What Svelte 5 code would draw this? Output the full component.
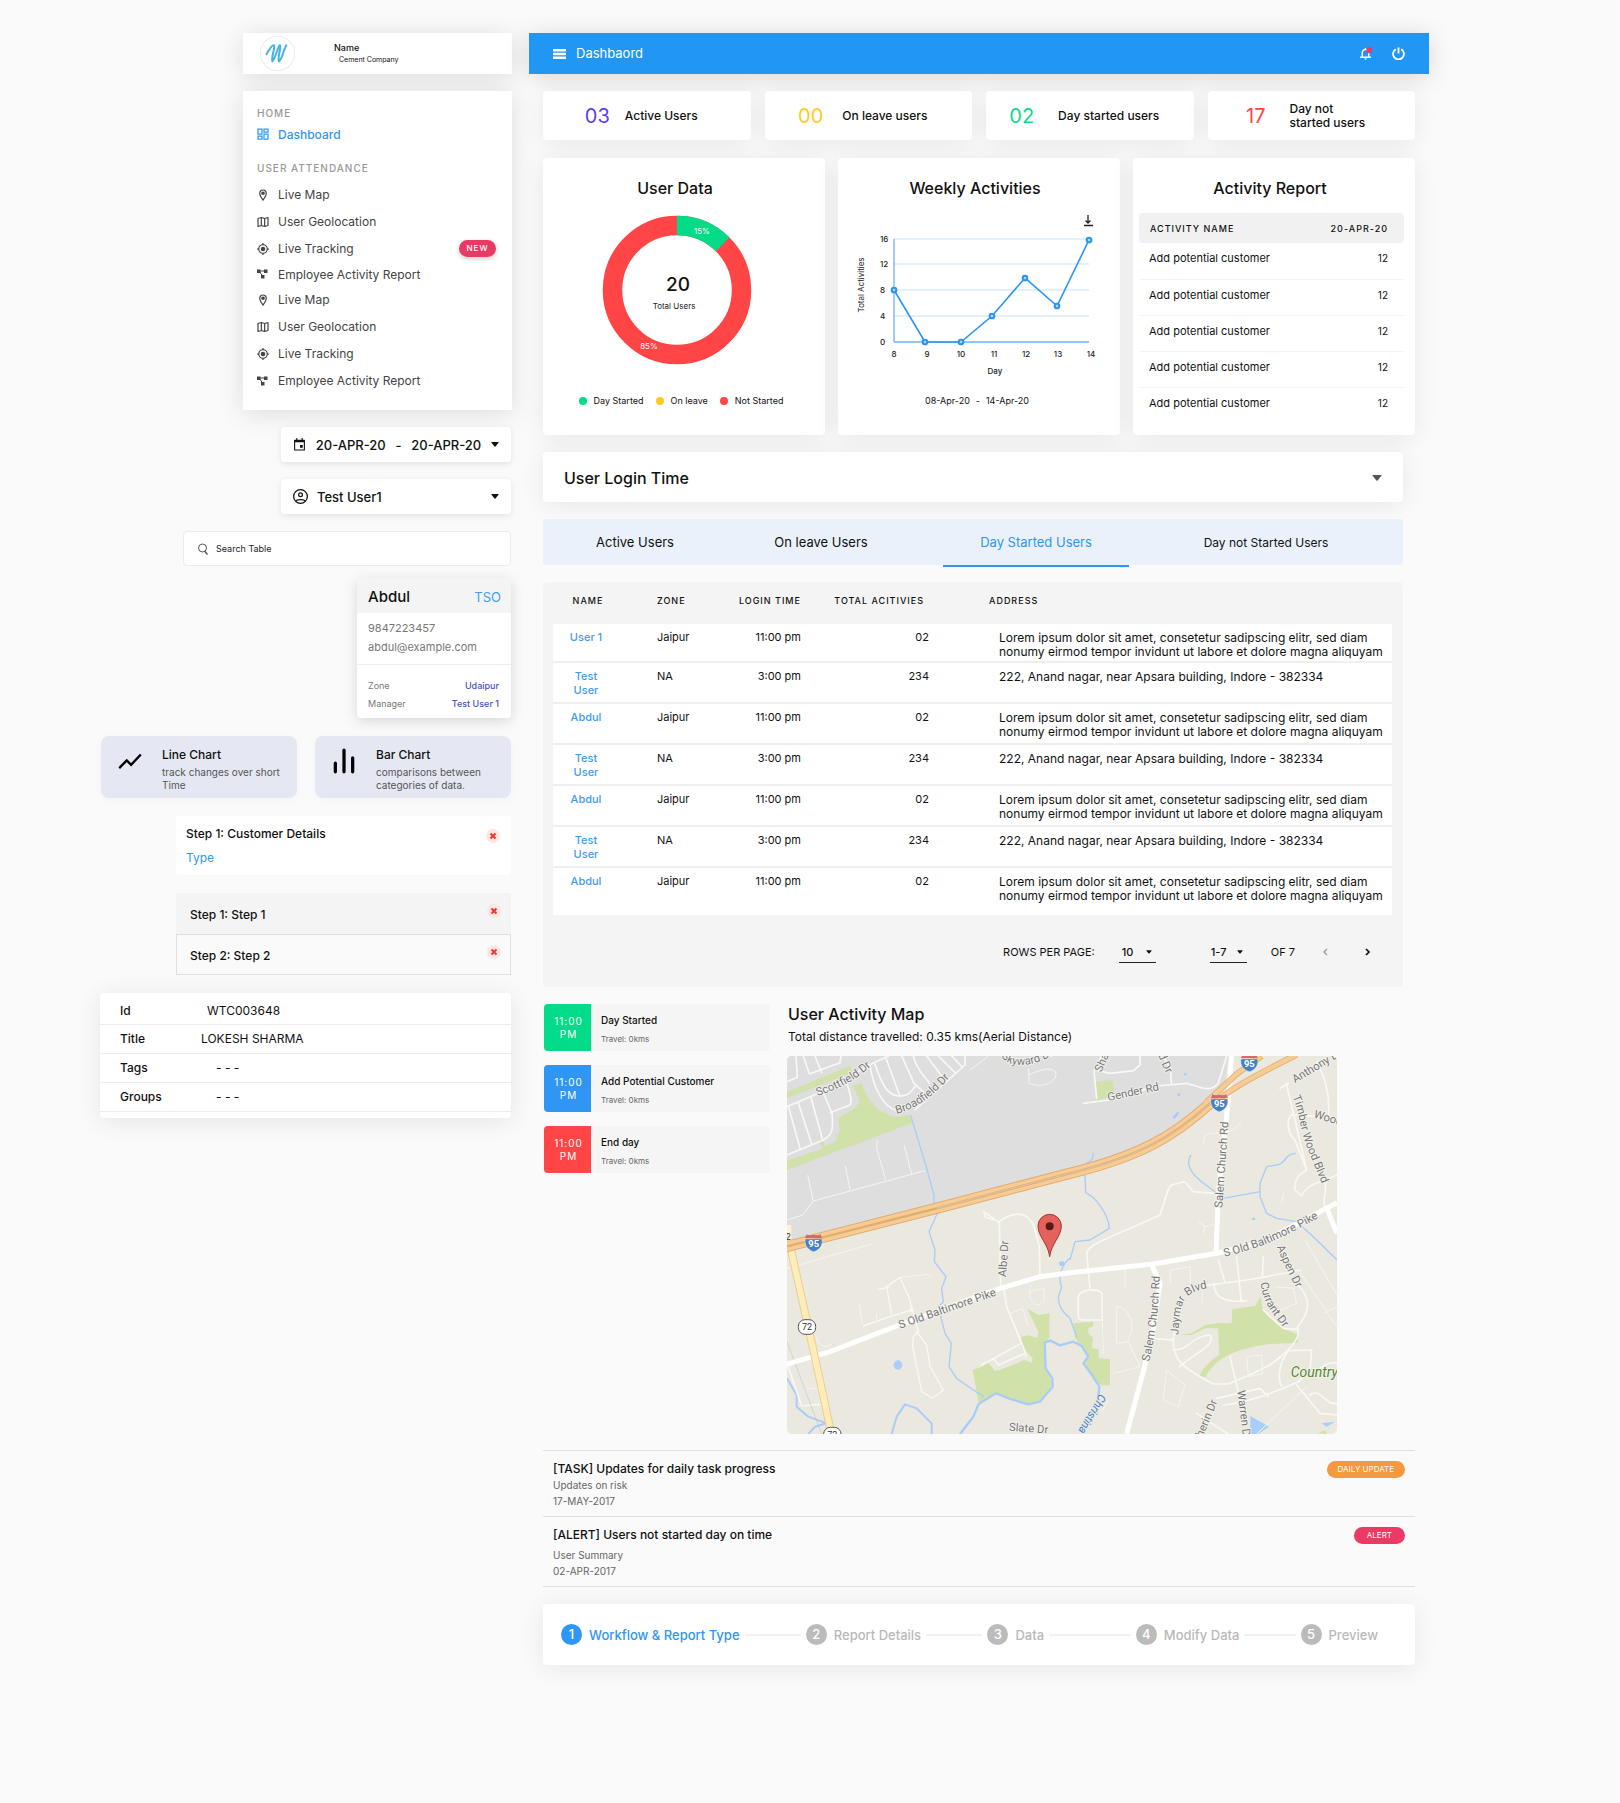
<script>
  const menu = [
    { icon: 'pin', label: 'Live Map' },
    { icon: 'map', label: 'User Geolocation' },
    { icon: 'target', label: 'Live Tracking', badge: 'NEW' },
    { icon: 'tree', label: 'Employee Activity Report', last: true },
    { icon: 'pin', label: 'Live Map' },
    { icon: 'map', label: 'User Geolocation' },
    { icon: 'target', label: 'Live Tracking' },
    { icon: 'tree', label: 'Employee Activity Report' }
  ];
  const stats = [
    { n: '03', label: 'Active Users', tone: 'violet' },
    { n: '00', label: 'On leave users', tone: 'yellow' },
    { n: '02', label: 'Day started users', tone: 'green' },
    { n: '17', label: 'Day not started users', tone: 'red' }
  ];
  const lorem = ['Lorem ipsum dolor sit amet, consetetur sadipscing elitr, sed diam', 'nonumy eirmod tempor invidunt ut labore et dolore magna aliquyam'];
  const plot = ['222, Anand nagar, near Apsara building, Indore - 382334'];
  const abdul = { name: 'Abdul', zone: 'Jaipur', time: '11:00 pm', total: '02', address: lorem };
  const test = { name: 'Test User', zone: 'NA', time: '3:00 pm', total: '234', address: plot };
  const logins = [{ ...abdul, name: 'User 1' }, test, abdul, test, abdul, test, abdul];
  const tabs = ['Active Users', 'On leave Users', 'Day Started Users', 'Day not Started Users'];
  let activeTab = $state(2);
  const events = [
    { label: 'Day Started', tone: 'green' },
    { label: 'Add Potential Customer', tone: 'blue' },
    { label: 'End day', tone: 'red' }
  ];
  const details = [
    { k: 'Id', v: 'WTC003648', kind: 'code' },
    { k: 'Title', v: 'LOKESH SHARMA', kind: 'name' },
    { k: 'Tags', v: '- - -', kind: 'empty' },
    { k: 'Groups', v: '- - -', kind: 'empty' }
  ];
  const steps = ['Workflow & Report Type', 'Report Details', 'Data', 'Modify Data', 'Preview'];
  const points = [[56, 85], [87, 137], [123, 137], [154, 111], [187, 73], [219, 101], [251, 35]];
  const yTicks = [[16, 34], [12, 59], [8, 85], [4, 111], [0, 137]];
  const xTicks = [[8, 56], [9, 89], [10, 123], [11, 156], [12, 188], [13, 220], [14, 253]];
</script>

{#snippet menuIcon(name)}
  <svg class="icon" viewBox="0 0 24 24" aria-hidden="true">
    {#if name === 'pin'}
      <path d="M12 2C8 2 5.500 5 5.500 8.500C5.500 14 12 22 12 22S18.500 14 18.500 8.500C18.500 5 16 2 12 2z" fill="none" stroke="currentColor" stroke-width="2.400" /><circle cx="12" cy="8.500" r="3.500" fill="currentColor" />
    {:else if name === 'map'}
      <path d="M2 5 8.700 3l6.600 2L22 3v16l-6.700 2-6.600-2L2 21zM8.700 3v16M15.300 5v16" fill="none" stroke="currentColor" stroke-width="2.400" stroke-linejoin="round" />
    {:else if name === 'target'}
      <circle cx="12" cy="12" r="8.500" fill="none" stroke="currentColor" stroke-width="2.400" /><circle cx="12" cy="12" r="4.500" fill="currentColor" /><path d="M12 0v4M12 20v4M0 12h4M20 12h4" stroke="currentColor" stroke-width="2.400" />
    {:else if name === 'tree'}
      <path d="M0 3h7v7H0zM14 3h7v7h-7zM8 14h7v7H8z" fill="currentColor" /><path d="M6 6h9M5 7l6 9" stroke="currentColor" stroke-width="2" />
    {:else}
      <path d="M2 2h8v10H2zM14 2h8v6h-8zM2 16h8v6H2zM14 12h8v10h-8z" fill="none" stroke="currentColor" stroke-width="2.500" />
    {/if}
  </svg>
{/snippet}

{#snippet caret()}
  <svg class="caret" viewBox="0 0 10 6" aria-hidden="true"><path d="M1 0h8q1 0 .4.800L5.600 5.400q-.6.600-1.200 0L.600.800Q0 0 1 0z" fill="currentColor" /></svg>
{/snippet}

{#snippet closeButton(label)}
  <button class="close" aria-label={label}>
    <svg viewBox="0 0 14 14" aria-hidden="true"><path d="M4.500 4.500l5 5M9.500 4.500l-5 5" stroke="#f0372f" stroke-width="2" /></svg>
  </button>
{/snippet}

{#snippet shield(x, y)}
  <g transform="translate({x} {y})">
    <path d="M-26 -13Q-20 -22 -22 -25Q-12 -20 0 -24Q12 -20 22 -25Q20 -22 26 -13z" fill="#d26a6a" />
    <path d="M-25 -11H25C28 8 18 22 0 27C-18 22 -28 8 -25 -11z" fill="#4580c4" stroke="#fff" stroke-width="1" />
    <text class="shield-text" x="0" y="13">95</text>
  </g>
{/snippet}

<div class="page">
  <aside class="side">
    <header class="brand">
      <svg class="logo" viewBox="0 0 102 102" role="img" aria-label="Company logo">
        <circle cx="51" cy="51" r="50" fill="#fff" stroke="#ececec" stroke-width="3" />
        <path d="M19 53C28 37 36 25 41 27C45 33 33 57 36 74C46 64 52 28 58 27C63 32 51 56 55 74C65 69 68 40 77 27" fill="none" stroke="#46b3e6" stroke-width="6" stroke-linecap="round" stroke-linejoin="round" />
      </svg>
      <div class="brand-text"><strong>Name</strong><span>Cement Company</span></div>
    </header>

    <nav class="menu" aria-label="Main">
      <h2>HOME</h2>
      <a class="current" href="#dashboard">{@render menuIcon('dash')}<span>Dashboard</span></a>
      <h2 class="second">USER ATTENDANCE</h2>
      <ul>
        {#each menu as item}
          <li class:short={item.last}>
            <a href="#{item.icon}">{@render menuIcon(item.icon)}<span>{item.label}</span>
              {#if item.badge}<em>{item.badge}</em>{/if}
            </a>
          </li>
        {/each}
      </ul>
    </nav>

    <button class="picker dates">
      <svg class="cal" viewBox="0 0 24 24" aria-hidden="true"><path d="M3 4h18v18H3z" fill="none" stroke="currentColor" stroke-width="2" stroke-linejoin="round" /><path d="M3 3.500h18V8H3zM6 0h2v4H6zM16 0h2v4h-2zM13 13h5v5h-5z" fill="currentColor" /></svg>
      <span>20-APR-20</span><span>-</span><span>20-APR-20</span>
      {@render caret()}
    </button>

    <div class="picker person">
      <svg class="face" viewBox="0 0 24 24" aria-hidden="true"><g fill="none" stroke="currentColor" stroke-width="2"><circle cx="12" cy="12" r="11" /><circle cx="12" cy="9" r="3" /><path d="M4.500 19.500C6 16 18 16 19.500 19.500" /></g></svg>
      <select aria-label="User"><option>Test User1</option></select>
      {@render caret()}
    </div>

    <label class="search">
      <svg viewBox="0 0 24 24" aria-hidden="true"><circle cx="11" cy="10" r="8" fill="none" stroke="#555" stroke-width="2" /><path d="M15 16l6 7" stroke="#555" stroke-width="3" /></svg>
      <input type="search" placeholder="Search Table" aria-label="Search Table" />
    </label>

    <section class="contact">
      <header><h3>Abdul</h3><span>TSO</span></header>
      <address><span>9847223457</span><span>abdul@example.com</span></address>
      <dl>
        <div><dt>Zone</dt><dd>Udaipur</dd></div>
        <div><dt>Manager</dt><dd>Test User 1</dd></div>
      </dl>
    </section>

    <div class="kinds">
      <button class="kind">
        <svg viewBox="0 0 24 24" aria-hidden="true"><path d="M2 18.500l7-7 4 4L22 6" fill="none" stroke="#000" stroke-width="2.200" /></svg>
        <span><strong>Line Chart</strong><small>track changes over short Time</small></span>
      </button>
      <button class="kind">
        <svg viewBox="0 0 24 24" aria-hidden="true"><path d="M4 14v8M12 2v20M20 9v13" fill="none" stroke="#000" stroke-width="3" stroke-linecap="round" /></svg>
        <span><strong>Bar Chart</strong><small>comparisons between categories of data.</small></span>
      </button>
    </div>

    <section class="step-card">
      <div><h3>Step 1: Customer Details</h3><a href="#type">Type</a></div>
      {@render closeButton('Remove customer details')}
    </section>

    <ul class="step-list">
      <li><span>Step 1: Step 1</span>{@render closeButton('Remove step 1')}</li>
      <li class="outlined"><span>Step 2: Step 2</span>{@render closeButton('Remove step 2')}</li>
    </ul>

    <div class="details">
      <table>
        <tbody>
          {#each details as d}
            <tr><th scope="row">{d.k}</th><td class={d.kind}>{d.v}</td></tr>
          {/each}
        </tbody>
      </table>
    </div>
  </aside>

  <main>
    <header class="topbar">
      <button aria-label="Menu"><svg class="burger" viewBox="0 0 13 10" aria-hidden="true"><path d="M0 1.300h13M0 5h13M0 8.700h13" stroke="#fff" stroke-width="2.400" /></svg></button>
      <h1>Dashbaord</h1>
      <button aria-label="Notifications"><svg class="bell" viewBox="0 0 24 24" aria-hidden="true"><path d="M2 19h20M6 18v-7c0-4 2-6.500 6-6.500s6 2.500 6 6.500v7M12 2v3" fill="none" stroke="#fff" stroke-width="2.600" /><path d="M9 21h6L12 24z" fill="#fff" /><circle cx="19" cy="6" r="5.500" fill="#ea3a63" /></svg></button>
      <button aria-label="Sign out"><svg class="power" viewBox="0 0 24 24" aria-hidden="true"><path d="M12 1v11M7 4.200a10 10 0 1 0 10 0" fill="none" stroke="#fff" stroke-width="3.400" /></svg></button>
    </header>

    <div class="content">
      <section class="stats" aria-label="Totals">
        {#each stats as s}
          <div class="stat"><strong class={s.tone}>{s.n}</strong><span>{s.label}</span></div>
        {/each}
      </section>

      <div class="cards">
        <section class="card">
          <h2>User Data</h2>
          <svg class="donut" viewBox="0 0 150 150" role="img" aria-label="User data: 15% day started, 85% not started">
            <circle cx="75" cy="75" r="64.500" fill="none" stroke="#ff4545" stroke-width="19.500" />
            <path d="M75 10.500A64.500 64.500 0 0 1 120.600 29.400" fill="none" stroke="#02db87" stroke-width="19.500" />
            <text class="pct" x="100" y="19">15%</text>
            <text class="pct" x="47" y="134">85%</text>
            <text class="big" x="76" y="76">20</text>
            <text class="cap" x="72" y="94">Total Users</text>
          </svg>
          <ul class="legend">
            <li><i class="dot green"></i>Day Started</li>
            <li><i class="dot yellow"></i>On leave</li>
            <li><i class="dot red"></i>Not Started</li>
          </ul>
        </section>

        <section class="card">
          <h2>Weekly Activities</h2>
          <svg class="line" viewBox="0 0 282 174" role="img" aria-label="Weekly activities line chart">
            <path d="M250 10v8M247.500 15.500l2.500 2.500 2.500-2.500M246 20.500h9" fill="none" stroke="#222" stroke-width="1.300" />
            {#each yTicks as [n, y]}
              <path d="M56 {y}H251" stroke="#c5e2fb" stroke-width="1" />
              <text class="tick" x="42" y={y + 3}>{n}</text>
            {/each}
            <path d="M56 34V137H251" fill="none" stroke="#3d9ef2" stroke-width="1" />
            <polyline points={points.map((p) => p.join()).join(' ')} fill="none" stroke="#2a94f2" stroke-width="1.600" />
            {#each points as [x, y]}<circle cx={x} cy={y} r="2.300" fill="#b5d9fa" stroke="#2a94f2" stroke-width="2.100" />{/each}
            {#each xTicks as [n, x]}<text class="tick mid" {x} y="152">{n}</text>{/each}
            <text class="tick mid" x="157" y="169">Day</text>
            <text class="tick mid axis" transform="translate(26 80) rotate(-90)">Total Activities</text>
          </svg>
          <p class="range"><span>08-Apr-20</span><span>-</span><span>14-Apr-20</span></p>
        </section>

        <section class="card">
          <h2>Activity Report</h2>
          <table class="report">
            <thead><tr><th>ACTIVITY NAME</th><th>20-APR-20</th></tr></thead>
            <tbody>
              {#each Array(5) as _}<tr><td>Add potential customer</td><td>12</td></tr>{/each}
            </tbody>
          </table>
        </section>
      </div>

      <div class="narrow">
        <button class="login-head"><span>User Login Time</span>{@render caret()}</button>

        <div class="tabs" role="tablist">
          {#each tabs as t, i}
            <button role="tab" aria-selected={i === activeTab} class:on={i === activeTab} onclick={() => (activeTab = i)}>{t}</button>
          {/each}
        </div>

        <section class="logins">
          <table>
            <thead><tr><th>NAME</th><th>ZONE</th><th>LOGIN TIME</th><th>TOTAL ACITIVIES</th><th>ADDRESS</th></tr></thead>
            <tbody>
              {#each logins as r}
                <tr>
                  <td><a href="#user">{r.name}</a></td><td>{r.zone}</td><td>{r.time}</td><td>{r.total}</td>
                  <td>{#each r.address as l}<span>{l}</span>{/each}</td>
                </tr>
              {/each}
            </tbody>
          </table>
          <footer>
            <label for="rows">ROWS PER PAGE:</label>
            <div class="drop"><select id="rows"><option>10</option></select>{@render caret()}</div>
            <div class="drop span"><select aria-label="Range"><option>1-7</option></select>{@render caret()}</div>
            <span class="of">OF 7</span>
            <button aria-label="Previous page" disabled><svg viewBox="0 0 6 8" aria-hidden="true"><path d="M5 1L2 4l3 3" fill="none" stroke="#999" stroke-width="1.300" /></svg></button>
            <button aria-label="Next page"><svg viewBox="0 0 6 8" aria-hidden="true"><path d="M1 1l3 3-3 3" fill="none" stroke="#111" stroke-width="1.700" /></svg></button>
          </footer>
        </section>
      </div>

      <section class="activity">
        <ol>
          {#each events as e}
            <li><time class={e.tone}>11:00 PM</time><div><strong>{e.label}</strong><small>Travel: 0kms</small></div></li>
          {/each}
        </ol>
        <div class="map-box">
          <h2>User Activity Map</h2>
          <p>Total distance travelled: 0.35 kms(Aerial Distance)</p>
          <svg class="map" viewBox="21 48 1650 1134" role="img" aria-label="Map of the travelled area">
            <rect x="21" y="48" width="1650" height="1134" fill="#eae8df" />
            <path d="M21 48H1345L1335 130L1290 190C1180 290 1080 350 850 400L470 500L21 612z" fill="#dedede" />
            <g fill="#d0e1aa">
              <path d="M21 155L210 77L216 98L21 175zM21 362L130 325L118 310L130 305L136 320L168 302L180 268L172 235L225 205L240 185L218 135L245 130C265 185 300 225 350 230L392 225L398 248L21 390z" />
              <path d="M578 990L606 980L625 968L645 993L660 990L690 978L735 960L755 968L758 955L722 915L725 890L742 886L772 893L775 875L742 806L775 825L808 820L808 895L795 908L797 985L818 1030L790 1080L745 1093L690 1077L648 1060L596 1090z" />
              <path d="M948 125L998 120L1005 165L950 182z" />
              <path d="M880 850L940 845L938 860L925 863L925 880L938 893L936 925L955 928L957 955L990 958L990 1036L968 1036L945 1028L912 975L925 950L900 915L885 895z" />
              <path d="M1198 885L1235 880L1275 855L1313 850L1355 850L1357 808L1425 798L1442 770L1448 810L1515 868L1555 885L1553 908L1470 912C1370 925 1310 950 1275 1012L1258 1008C1270 980 1300 955 1318 945L1314 865L1275 865L1235 885z" />
              <path d="M1615 1180L1635 1170L1640 1182z" />
            </g>
            <g fill="none" stroke="#a9cdf8" stroke-width="4" stroke-linejoin="round">
              <path d="M392 226L440 385L462 465V495M472 520L447 575L465 630L463 665L498 710L485 745L490 785L475 800L495 880L514 910L507 980L530 1015L580 1050L612 1070" />
              <path stroke-width="7" d="M540 1182L580 1130L596 1092L648 1060L690 1077L745 1093L780 1085L818 1040L817 1015L797 985L794 908L812 902L840 916L880 905L905 918L925 950L910 970L940 1010L958 1040L955 1070" />
              <path stroke-width="6" d="M335 1182L350 1130L375 1093L410 1105L455 1150V1182M21 1015L50 1065V1100L85 1130L140 1150L105 1160L85 1182" />
              <path d="M870 655C845 670 832 720 845 740L835 770C835 800 850 820 870 835L890 890M870 660L885 605L930 600L988 565C985 520 945 470 917 458L915 405M918 400L920 370L937 358L940 338M1233 345C1215 370 1232 400 1265 425L1305 455M1330 475L1440 455M1547 340C1515 340 1520 370 1490 375L1460 380L1440 430V470L1460 520L1490 535L1550 545L1600 590L1671 660" />
              <path d="M1180 235L1195 217M1195 160L1198 168M1214 100L1218 105M1421 533V540" stroke-width="8" />
            </g>
            <g fill="#a9cefb"><ellipse cx="354" cy="975" rx="13" ry="14" /><ellipse cx="845" cy="671" rx="8" ry="7" /><path d="M1411 1128L1467 1160L1435 1182H1411zM1625 1150L1665 1145L1640 1160z" /></g>

            <g fill="none" stroke="#f9f8f5" stroke-width="5" stroke-linejoin="round" stroke-linecap="round">
              <path d="M21 200L150 145L268 75L325 48M25 198L60 325M55 188L95 312M93 172L128 300M130 158L156 220C160 270 158 285 130 300L21 345M150 218L210 195C220 180 205 150 200 125M48 48L52 112L21 125M70 48L88 102L180 68L183 48M105 48L125 98" />
              <path d="M270 75C280 145 310 200 350 212M285 72C310 150 330 165 355 168C390 170 395 150 405 140M318 55L358 165M365 48L402 130L430 155M400 48C410 90 435 110 448 130M440 48L490 115M475 48L525 98M515 48L545 80M405 210L555 75V48" />
              <path d="M950 175L942 95L965 48M955 92L990 100L1060 92L1080 75V48M910 190L985 180L1130 138L1220 130C1260 140 1290 160 1315 130L1340 48M1174 130L1172 90L1150 48" />
              <path d="M662 735L658 545C690 520 740 505 762 560L778 620L780 705M658 548L612 516L615 530L640 540M672 750L680 800L735 935L738 950M605 975L650 950L720 912M640 955L655 975L735 940" />
              <path d="M395 815L390 780L360 712L320 740L335 825M395 800L415 875L400 890L398 920L425 1055L458 1075L490 1050L450 980L440 915L410 875M325 742L295 748M250 858L330 830L395 810" stroke-width="4" />
              <path d="M21 970L65 1098L135 1092M930 745L920 640C925 610 1000 590 1140 525C1160 470 1160 445 1175 435L1215 425L1240 455L1305 460M895 835L895 770C900 745 960 745 965 760L967 840L905 840z" />
              <path d="M1240 742L1400 720L1450 712L1560 690M1302 730C1302 770 1330 790 1400 782M1315 660L1335 728M1370 650L1383 780M1450 650L1447 712M1180 895L1185 860M1180 895C1175 960 1210 985 1300 1032L1345 1032L1420 1000L1470 975C1510 945 1540 920 1555 885L1553 860C1590 815 1595 780 1555 735M1120 895L1180 900M1180 930C1230 930 1230 890 1290 885C1310 915 1250 935 1200 980" />
              <path d="M1520 135L1580 390M1525 130L1500 145M1610 65C1640 120 1650 180 1645 230L1535 225C1520 235 1520 280 1545 300L1580 390C1560 400 1540 420 1545 450L1565 468C1580 430 1630 425 1671 405M1633 420C1645 460 1625 470 1635 500M1510 865L1550 868M1510 865L1470 830L1450 810M1350 950L1385 1100M1330 1095C1390 1090 1480 1060 1555 1025L1590 990L1595 930L1525 932C1500 965 1490 1010 1505 1040M1550 1035L1620 1120L1671 1125M1620 985C1650 960 1671 970 1671 970M1590 1065C1620 1040 1640 1100 1671 1090M1310 1075L1440 1045L1465 1070M1250 1120L1310 1160L1345 1182" />
            </g>
            <g fill="none" stroke="#f6f5f0" stroke-width="3">
              <path d="M21 540L68 525L100 483L435 392M100 483L83 405M210 450L196 378M317 420L290 325L292 300M395 402L373 318M568 92L625 48M745 85L748 130C780 145 830 130 828 100C820 80 790 85 745 105M21 685L275 612M248 855L238 790M290 838V820M360 712L445 703L455 712M690 820L728 805L745 860M752 735L748 760C750 800 780 800 792 785V745L750 755M80 1045H118M108 890C120 925 145 925 155 910M1270 310C1270 250 1340 310 1385 245M1255 545L1275 560L1300 553M1275 560L1270 580M1172 690L1230 680L1232 740M1172 690L1170 730M1270 740L1265 790M1010 800C1040 800 1060 840 1055 870L1045 905L1010 910zM1045 905L1080 980L1000 1000M1160 990L1215 1035L1195 1100L1150 1080L1155 1030zM1400 950L1445 945L1448 1000L1405 1010zM1575 600L1671 765M1555 690L1671 860M1480 740L1540 745L1550 790L1490 815M1505 490L1510 460M1630 820L1671 800M1430 1182L1580 1040M970 940L965 780M1035 685V745M965 1115L985 1080" />
              <path stroke="#c9c9c9" stroke-width="2" d="M21 905L125 1182" />
            </g>

            <g fill="none" stroke="#fff" stroke-width="15" stroke-linejoin="round">
              <path d="M21 972L150 935L350 858L660 745L780 710L870 698L1120 672L1310 640L1450 605L1671 488M1355 48L1345 180L1315 460L1308 640M1115 675L1140 730L1115 900L1040 1182M1640 505L1671 580" />
            </g>
            <g fill="none">
              <path d="M33 630L100 930L155 1185" stroke="#e7cf95" stroke-width="24" /><path d="M33 630L100 930L155 1185" stroke="#ffecb8" stroke-width="18" />
              <g stroke="#dfae72" stroke-width="34"><path d="M15 621L470 505L850 405C1080 350 1180 290 1290 190" /><path stroke-width="18" d="M1280 186L1370 102L1445 48M1290 200C1350 145 1420 110 1550 44" /></g>
              <g stroke="#f7cb93" stroke-width="28"><path d="M15 621L470 505L850 405C1080 350 1180 290 1290 190" /><path stroke-width="13" d="M1276 190L1370 102L1445 48M1285 203C1350 145 1420 110 1550 44" /></g>
              <path d="M21 619L470 505L850 405C1080 350 1180 290 1290 190" stroke="#dfae72" stroke-width="7" /><path d="M470 505L850 405C1080 350 1180 290 1290 190" stroke="#d6d0c6" stroke-width="2" />
            </g>

            <defs>
              <path id="r-broad" d="M350 222C410 205 460 170 515 105" /><path id="r-scott" d="M112 168C180 145 230 120 285 68" />
              <path id="r-aspen" d="M1490 620C1510 670 1525 700 1560 765" /><path id="r-currant" d="M1442 728C1450 790 1470 810 1525 882" />
              <path id="r-timber" d="M1537 170C1560 220 1555 250 1580 320L1635 455" /><path id="r-jaymar" d="M1195 885C1200 800 1200 760 1280 745" />
              <path id="r-salem" d="M1108 965C1125 880 1135 840 1140 680" /><path id="r-pike" d="M1333 650C1440 625 1520 590 1650 514" />
              <path id="r-sky" d="M664 50C690 85 760 90 850 25" /><path id="r-chris" d="M957 1060C940 1110 900 1140 875 1225" />
              <path id="r-sherin" d="M1260 1212L1322 1062" />
            </defs>
            <g class="road">
              <text><textPath href="#r-scott">Scottfield Dr</textPath></text><text><textPath href="#r-broad">Broadfield Dr</textPath></text>
              <text><textPath href="#r-sky">Skyward Dr</textPath></text><text><textPath href="#r-aspen">Aspen Dr</textPath></text>
              <text><textPath href="#r-currant">Currant Dr</textPath></text><text><textPath href="#r-timber">Timber Wood Blvd</textPath></text>
              <text><textPath href="#r-jaymar">Jaymar Blvd</textPath></text><text><textPath href="#r-salem">Salem Church Rd</textPath></text>
              <text><textPath href="#r-pike">S Old Baltimore Pike</textPath></text><text><textPath href="#r-sherin">Sherin Dr</textPath></text>
              <text transform="translate(360 866) rotate(-19)">S Old Baltimore Pike</text>
              <text transform="translate(678 712) rotate(-86)">Albe Dr</text>
              <text transform="translate(686 1172) rotate(4)">Slate Dr</text>
              <text transform="translate(985 183) rotate(-12)">Gender Rd</text>
              <text transform="translate(964 98) rotate(-66)">Shawn</text>
              <text transform="translate(1126 28) rotate(66)">nd Dr</text>
              <text transform="translate(1327 504) rotate(-86)">Salem Church Rd</text>
              <text transform="translate(1545 130) rotate(-31)">Anthony Dr</text>
              <text transform="translate(1600 232) rotate(17)">Wood</text>
              <text transform="translate(1372 1052) rotate(83)">Warren Dr</text>
            </g>
            <text class="water"><textPath href="#r-chris">Christina</textPath></text>
            <text class="park" x="1532" y="1012">Country</text>
            {@render shield(101, 608)}{@render shield(1408, 68)}{@render shield(1318, 188)}
            <g fill="#fff" stroke="#555" stroke-width="3"><rect x="55" y="839" width="52" height="44" rx="20" /><rect x="131" y="1162" width="52" height="44" rx="20" /></g>
            <text class="route" x="81" y="870">72</text><text class="route" x="157" y="1193">72</text>
            <rect x="21" y="555" width="13" height="46" fill="#fff3d4" /><text class="route" x="25" y="600">2</text>
            <path d="M809 650C804 610 774 590 774 558A35 35 0 0 1 844 558C844 590 814 610 809 650z" fill="#e4625c" stroke="#a8322d" stroke-width="3" /><circle cx="809" cy="559" r="12" fill="#541a18" />
          </svg>
        </div>
      </section>

      <section class="notices">
        <article><div><h3>[TASK] Updates for daily task progress</h3><p>Updates on risk</p><p>17-MAY-2017</p></div><span class="tag orange">DAILY UPDATE</span></article>
        <article class="loose"><div><h3>[ALERT] Users not started day on time</h3><p>User Summary</p><p>02-APR-2017</p></div><span class="tag pink">ALERT</span></article>
      </section>

      <ol class="stepper">
        {#each steps as s, i}
          <li class:on={i === 0}><b>{i + 1}</b><span>{s}</span></li>
        {/each}
      </ol>
    </div>
  </main>
</div>

<style>
  :global(body) { background: #fafafa; }
  .page, .page * { box-sizing: border-box; }
  .page { display: grid; grid-template-columns: minmax(0, 412fr) minmax(0, 900fr); column-gap: 17px; padding: 33px 191px 136px 100px; font-family: Inter, "Liberation Sans", sans-serif; font-size: 12px; color: #111; overflow: hidden; }
  h1, h2, h3, p, ul, ol, dl, dd { margin: 0; padding: 0; }
  h1, h2, h3 { font-weight: 500; }
  ul, ol { list-style: none; }
  a { color: inherit; text-decoration: none; }
  button, select, input { font: inherit; color: inherit; border: 0; background: none; padding: 0; margin: 0; appearance: none; outline: 0; }
  button { cursor: pointer; text-align: left; }
  table { border-collapse: collapse; width: 100%; }
  svg { display: block; flex: none; }
  .caret { width: 8px; height: 5px; }

  .side { display: flex; flex-direction: column; align-items: flex-end; }
  .brand { width: 269px; height: 41px; background: #fff; display: flex; align-items: center; padding-left: 17px; box-shadow: 0 3px 24px rgba(0, 0, 0, .12); }
  .logo { width: 35px; height: 35px; }
  .brand-text { margin-left: 39px; display: flex; flex-direction: column; }
  .brand-text strong { font-size: 9px; line-height: 13px; font-weight: 500; }
  .brand-text span { font-size: 7px; line-height: 12px; padding-left: 5px; }

  .menu { width: 269px; background: #fff; margin-top: 17px; padding: 15px 16px 16px 14px; box-shadow: 0 3px 24px rgba(0, 0, 0, .12); color: #444; }
  .menu h2 { font-size: 10px; line-height: 14px; letter-spacing: 1px; color: #999; }
  .menu h2.second { margin: 16px 0 6px; }
  .menu a { display: flex; align-items: center; height: 27px; }
  .menu a.current { height: 22px; margin-top: 3px; color: #2f96f3; font-weight: 500; }
  .menu a span { margin-left: 9px; flex: 1; }
  .menu .short a { height: 24px; }
  .icon { width: 12px; height: 12px; }
  .menu em { font-style: normal; font-weight: 500; font-size: 8px; line-height: 17px; width: 37px; text-align: center; letter-spacing: 1px; color: #fff; background: #e93a65; border-radius: 9px; box-shadow: 0 2px 5px rgba(0, 0, 0, .2); }

  .picker, .search, .kinds, .step-card, .step-list, .details { margin-right: 1px; }
  .picker { width: 230px; height: 35px; background: #fff; border-radius: 4px; margin-top: 17px; display: flex; align-items: center; padding: 0 12px; box-shadow: 0 2px 6px rgba(0, 0, 0, .1); font-size: 13px; font-weight: 500; }
  .dates { justify-content: space-between; }
  .cal { width: 13px; height: 13px; }
  .face { width: 15px; height: 15px; }
  .picker select { flex: 1; margin-left: 9px; font-weight: 500; }
  .search { width: 328px; height: 35px; margin-top: 17px; background: #fff; border: 1px solid #ececec; border-radius: 4px; display: flex; align-items: center; padding-left: 13px; }
  .search svg { width: 12px; height: 12px; }
  .search input { flex: 1; margin-left: 7px; font-size: 9px; }
  .search input::placeholder { color: #222; opacity: 1; }

  .contact { width: 154px; margin: 12px 1px 0 0; background: #fff; border-radius: 4px; box-shadow: 0 3px 14px rgba(0, 0, 0, .14); overflow: hidden; color: #777; }
  .contact header { height: 35px; background: #f4f4f4; display: flex; align-items: center; justify-content: space-between; padding: 2px 10px 0 11px; }
  .contact h3 { font-size: 15px; color: #111; }
  .contact header span { font-size: 13px; color: #3f9ff5; }
  .contact address { font-style: normal; font-size: 11px; line-height: 19px; padding: 6px 11px 7px; display: flex; flex-direction: column; border-bottom: 1px solid #eee; }
  .contact dl { padding: 12px 12px 5px 11px; font-size: 9px; line-height: 18px; }
  .contact dl div { display: flex; justify-content: space-between; }
  .contact dd { color: #4654bd; font-weight: 500; }

  .kinds { display: flex; gap: 18px; margin-top: 18px; }
  .kind { width: 196px; height: 62px; border-radius: 8px; background: #e5e8f2; padding: 12px 12px 0 16px; display: flex; align-items: flex-start; box-shadow: 0 2px 10px rgba(0, 0, 0, .03); }
  .kind svg { width: 26px; height: 26px; margin-right: 19px; }
  .kind strong { display: block; font-weight: 500; line-height: 14px; }
  .kind small { display: block; font-size: 10px; line-height: 13px; color: #555; margin-top: 4px; }
  .close { width: 14px; height: 14px; border-radius: 50%; background: #fde6e4; }
  .step-card { width: 335px; height: 59px; margin-top: 18px; background: #fff; border-radius: 4px; padding: 10px 11px 0 10px; display: flex; justify-content: space-between; }
  .step-card h3 { font-size: 12px; line-height: 16px; }
  .step-card a { display: block; line-height: 16px; margin-top: 8px; color: #2f96f3; }
  .step-card .close { margin-top: 3px; }
  .step-list { width: 335px; margin-top: 18px; font-weight: 500; }
  .step-list li { height: 41px; background: #f4f4f4; display: flex; justify-content: space-between; padding: 10px 9px 0 13px; border: 1px solid #f4f4f4; }
  .step-list li.outlined { background: none; border-color: #dfdfdf; }
  .step-list span { line-height: 22px; }
  .details { width: 411px; margin-top: 18px; padding-bottom: 6px; background: #fff; border-radius: 4px; box-shadow: 0 3px 24px rgba(0, 0, 0, .09); }
  .details tr { height: 29px; border-bottom: 1px solid #ececec; }
  .details tr:first-child { height: 31px; }
  .details th { width: 101px; padding: 0 0 0 20px; text-align: left; font-weight: 500; }
  .details tr:first-child > * { padding-top: 4px; }
  .details td { padding: 0; }
  .details .code { padding-left: 6px; }
  .details .empty { padding-left: 15px; }

  .topbar { height: 41px; background: #2196f3; display: flex; align-items: center; padding: 0 24px; color: #fff; box-shadow: 0 3px 24px rgba(0, 0, 0, .14); }
  .topbar h1 { flex: 1; font-size: 13px; font-weight: 400; margin-left: 10px; padding-bottom: 2px; }
  .topbar button + button { margin-left: 20px; }
  .burger { width: 13px; height: 10px; }
  .bell, .power { width: 13px; height: 13px; }
  .content { padding: 0 14px; }
  .stats { display: grid; grid-template-columns: repeat(4, 1fr); gap: 14px; margin-top: 17px; }
  .stat { height: 49px; background: #fff; border-radius: 4px; display: flex; align-items: center; justify-content: center; gap: 15px; padding-right: 11px; font-weight: 500; }
  .stat, .card, .login-head, .stepper { box-shadow: 0 3px 24px rgba(0, 0, 0, .08); }
  .stat strong { font-size: 20px; font-weight: 400; }
  .stat span { line-height: 14px; }
  .stat:nth-child(2) { gap: 19px; }
  .stat:nth-child(3), .stat:nth-child(4) { gap: 24px; }
  .stat:nth-child(4) span { width: 76px; }
  .stat .violet { color: #5b3df2; } .stat .yellow { color: #ffcb1f; } .stat .green { color: #0fd989; } .stat .red { color: #ff4545; }
  .cards { display: grid; grid-template-columns: repeat(3, minmax(0, 1fr)); gap: 13px; margin-top: 18px; }
  .card { height: 277px; background: #fff; border-radius: 4px; }
  .card h2 { font-size: 16px; line-height: 20px; padding: 20px 8px 0 0; text-align: center; }
  .donut { width: 150px; height: 150px; margin: 17px auto 0; }
  .card:first-child { padding-right: 14px; }
  .card:first-child h2 { padding-right: 4px; }
  .donut text { text-anchor: middle; font-size: 8px; fill: #222; }
  .donut .pct { fill: #fff; }
  .donut .big { font-size: 19px; font-weight: 500; fill: #111; }
  .legend { display: flex; justify-content: center; gap: 12px; margin: 29px -8px 0 0; font-size: 9px; line-height: 14px; }
  .legend li { display: flex; align-items: center; }
  .dot { width: 8px; height: 8px; border-radius: 50%; margin-right: 7px; }
  .dot.green { background: #02db87; } .dot.yellow { background: #ffcb1f; } .dot.red { background: #ff4545; }
  .line { width: 100%; margin-top: 7px; }
  .tick { font-size: 8px; font-weight: 500; fill: #222; }
  .mid { text-anchor: middle; }
  .axis { font-weight: 400; }
  .range { display: flex; justify-content: center; gap: 6px; margin-top: 15px; padding-right: 4px; font-size: 9px; line-height: 14px; }
  .report { width: calc(100% - 17px); margin: 15px 0 0 6px; font-size: 11px; }
  .report th { height: 30px; background: #f1f1f1; font-size: 9px; font-weight: 500; letter-spacing: 1px; text-align: left; padding: 0 0 0 11px; border-radius: 4px 0 0 4px; }
  .report td { height: 36px; padding: 0 0 5px 10px; border-bottom: 1px solid #f3f3f3; }
  .report tr:last-child td { border: 0; }
  .report tr > :last-child { text-align: right; padding-right: 16px; border-radius: 0 4px 4px 0; }
  .report td:last-child { font-size: 10px; }

  .narrow { margin-right: 12px; }
  .login-head { width: 100%; height: 50px; margin-top: 17px; background: #fff; border-radius: 4px; padding: 2px 21px 0; display: flex; align-items: center; justify-content: space-between; font-size: 16px; font-weight: 500; }
  .login-head .caret { width: 10px; height: 6px; color: #555; }
  .tabs { margin-top: 17px; height: 46px; background: #eaf1fa; border-radius: 3px; display: grid; grid-template-columns: 184fr 216fr 186fr 274fr; }
  .tabs button { height: 48px; text-align: center; font-size: 13px; border-bottom: 2px solid transparent; }
  .tabs button:nth-child(2) { padding-right: 28px; }
  .tabs button:nth-child(4) { font-size: 12px; }
  .tabs .on { color: #2f96f3; border-color: #2f96f3; }
  .logins { margin-top: 17px; background: #f4f4f4; border-radius: 4px; padding: 0 11px 0 10px; }
  .logins table { table-layout: fixed; font-size: 11px; line-height: 14px; }
  .logins th { height: 42px; padding: 0 0 4px; font-size: 9px; font-weight: 500; letter-spacing: 1px; text-align: left; white-space: nowrap; }
  .logins td { vertical-align: top; padding: 6px 0 0; }
  .logins th:nth-child(1) { width: 70px; }
  .logins th:nth-child(2) { width: 90px; }
  .logins th:nth-child(3) { width: 88px; }
  .logins th:nth-child(4) { width: 128px; }
  .logins tr > :nth-child(1) { text-align: center; }
  .logins tr > :nth-child(2) { padding-left: 34px; }
  .logins tr > :nth-child(3), .logins tr > :nth-child(4) { text-align: right; }
  .logins th:nth-child(4) { padding-right: 5px; }
  .logins th:nth-child(5) { padding-left: 60px; }
  .logins td:nth-child(5) { padding: 7px 0 0 70px; font-size: 12px; white-space: nowrap; }
  .logins td:nth-child(5) span { display: block; }
  .logins td a { display: inline-block; max-width: 50px; color: #3f9bf0; font-weight: 500; }
  .logins td:nth-child(1) { padding: 6px 18px 0 14px; }
  .logins tbody tr { height: 41px; background: #fff; border-bottom: 2px solid #efefef; }
  .logins tbody tr:first-child { height: 38px; }
  .logins tbody tr:last-child { height: 48px; border: 0; }
  .logins footer { height: 72px; display: flex; align-items: center; justify-content: flex-end; padding: 2px 21px 0 0; font-size: 11px; }
  .drop { width: 37px; height: 21px; margin-left: 24px; border-bottom: 1px solid #222; display: flex; align-items: center; padding: 0 4px 0 3px; }
  .drop select { flex: 1; min-width: 0; font-weight: 500; }
  .drop .caret { width: 6px; height: 4px; }
  .drop.span { margin-left: 54px; padding-left: 1px; }
  .of { margin: 0 27px 0 24px; }
  .logins footer button + button { margin-left: 37px; }
  .logins footer svg { width: 6px; height: 8px; }

  .activity { display: grid; grid-template-columns: 228px minmax(0, 550px); column-gap: 16px; margin-top: 17px; }
  .activity ol { display: flex; flex-direction: column; gap: 14px; padding: 0 1px; }
  .activity li { display: flex; height: 47px; background: #f5f5f5; border-radius: 4px; overflow: hidden; }
  .activity time { width: 47px; padding: 11px 6px 0 8px; font-size: 10px; line-height: 13px; letter-spacing: 1px; text-align: center; color: #fff; }
  time.green { background: #02db87; } time.blue { background: #2f96f3; } time.red { background: #ff4545; }
  .activity li div { padding: 9px 0 0 10px; }
  .activity strong { display: block; font-size: 10px; line-height: 14px; font-weight: 500; }
  .activity small { display: block; font-size: 8px; line-height: 12px; margin-top: 6px; color: #666; }
  .map-box h2 { font-size: 16px; line-height: 20px; padding-left: 1px; }
  .map-box p { font-size: 12px; line-height: 18px; margin: 4px 0 10px; padding-left: 1px; }
  .map { width: 100%; border-radius: 5px; }
  .road text, .water, .park, .route, .shield-text { font-family: Roboto, sans-serif; font-size: 34px; fill: #777; }
  .road text { stroke: #f4f3ef; stroke-width: 5px; paint-order: stroke; }
  .map .water { fill: #3f7fd6; font-style: italic; }
  .map .park { font-size: 42px; font-style: italic; fill: #55862c; stroke: #f4f3ef; stroke-width: 5px; paint-order: stroke; }
  .map .route { font-size: 27px; fill: #333; text-anchor: middle; }
  .map .shield-text { font-size: 28px; font-weight: 700; fill: #fff; text-anchor: middle; }

  .notices { margin-top: 16px; border-top: 1px solid #e0e0e0; }
  .notices article { display: flex; justify-content: space-between; align-items: flex-start; padding: 10px 10px 7px; border-bottom: 1px solid #e0e0e0; }
  .notices h3 { font-size: 12px; line-height: 16px; }
  .notices p { font-size: 10px; line-height: 16px; color: #666; }
  .notices .loose h3 { margin-bottom: 4px; }
  .tag { font-size: 8px; line-height: 17px; border-radius: 9px; color: #fff; padding: 0 11px; }
  .orange { background: #f5993f; } .pink { background: #ea3a65; padding: 0 13px; }
  .stepper { margin-top: 17px; height: 61px; background: #fff; border-radius: 4px; padding: 0 37px 0 18px; display: flex; align-items: center; font-size: 13px; color: #b9b9b9; }
  .stepper li { display: flex; align-items: center; flex: 11 1 auto; }
  .stepper li:nth-child(3) { flex-grow: 16; }
  .stepper li:nth-child(4) { flex-grow: 10; }
  .stepper li:last-child { flex: none; }
  .stepper b { width: 21px; height: 21px; line-height: 21px; border-radius: 50%; background: #bbb; color: #fff; text-align: center; font-weight: 500; }
  .stepper span { margin-left: 7px; font-weight: 500; white-space: nowrap; }
  .stepper li:not(:last-child)::after { content: ""; flex: 1; height: 2px; background: #f1f1f1; margin: 0 5px; }
  .stepper .on { color: #2f96f3; } .stepper .on b { background: #2f96f3; }
</style>
